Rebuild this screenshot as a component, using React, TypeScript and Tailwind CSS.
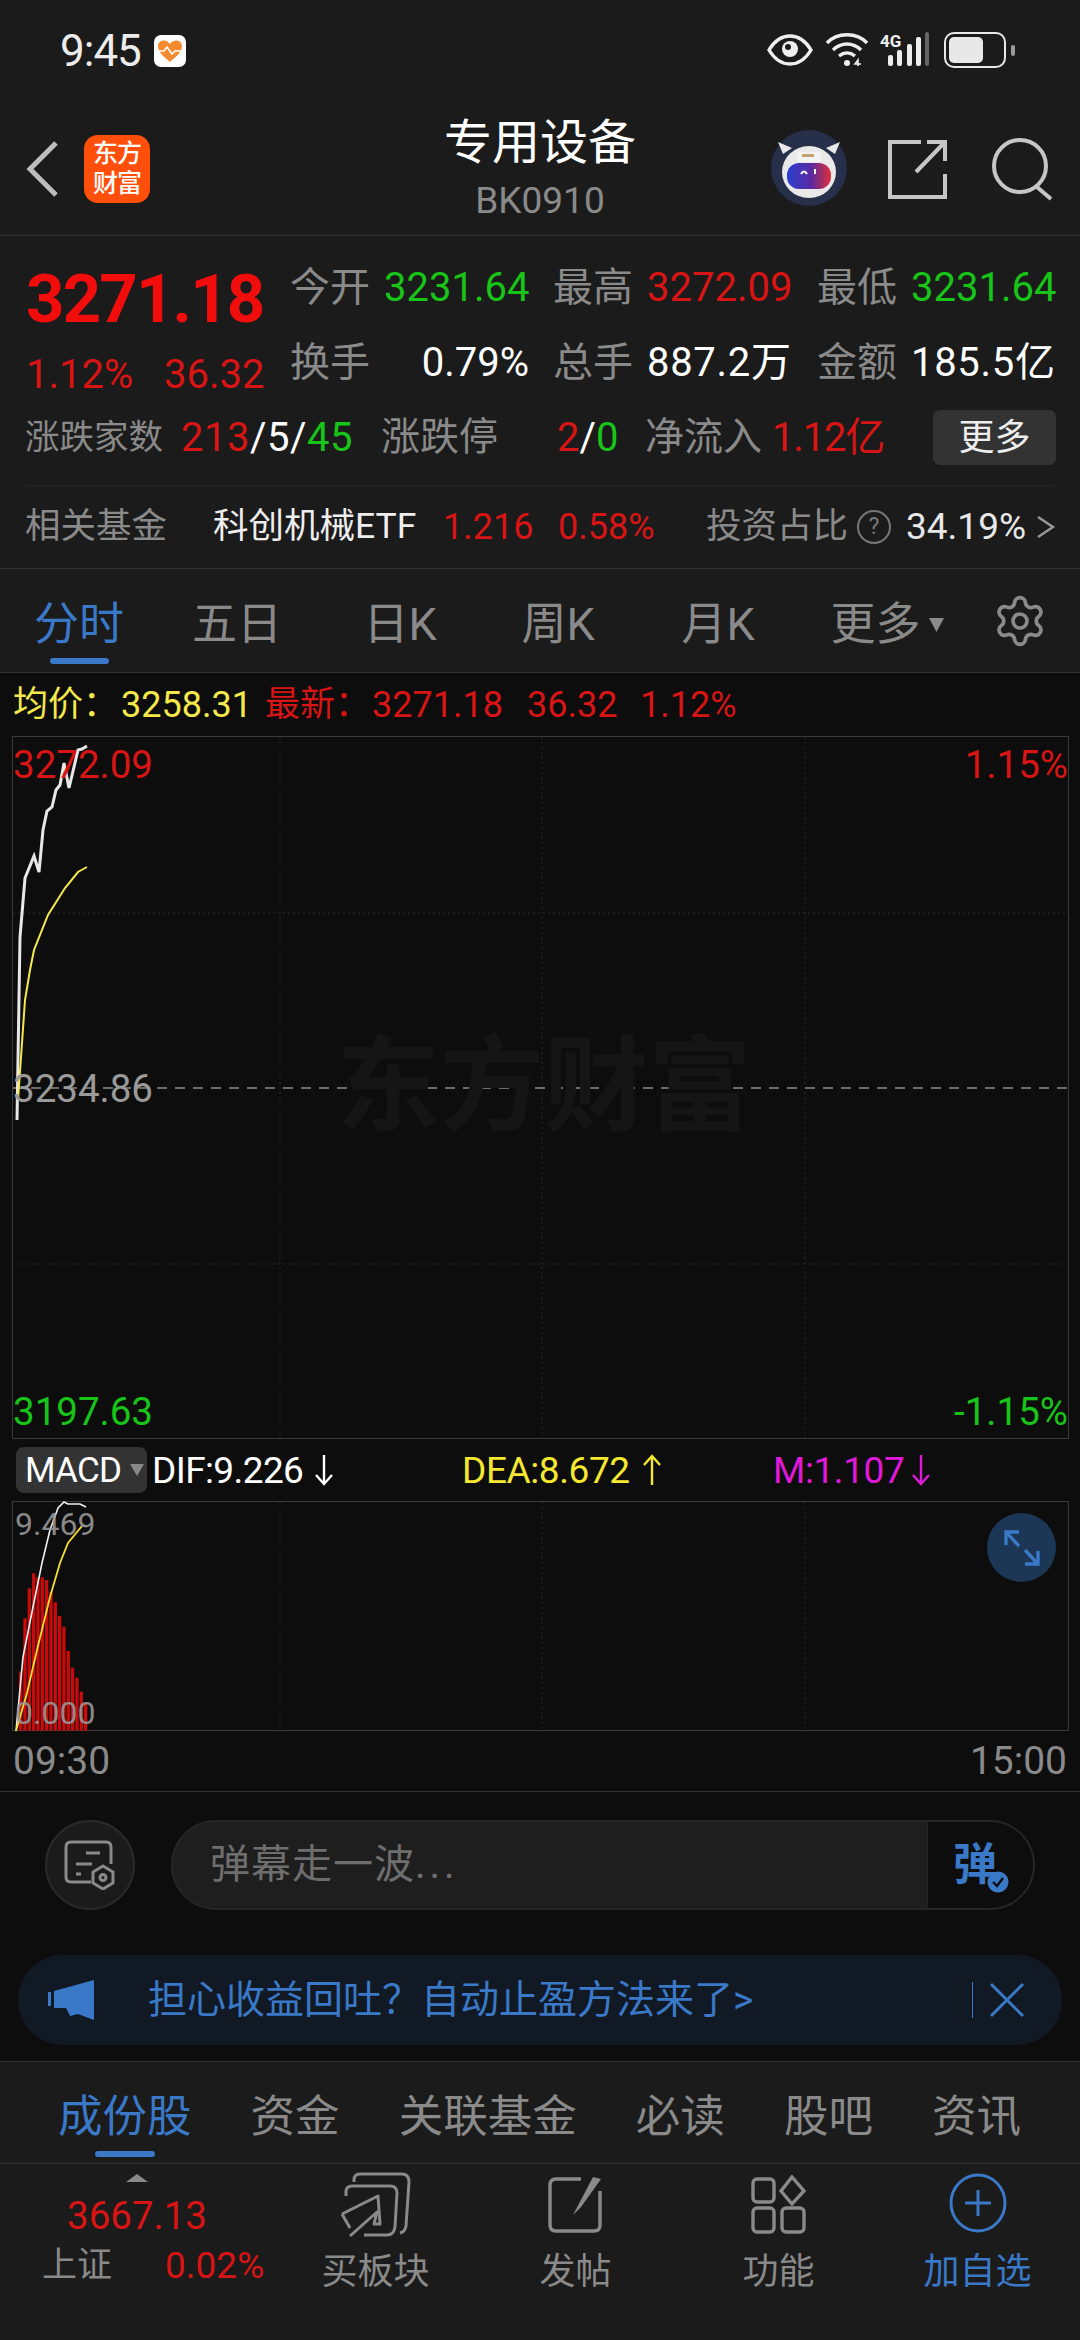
import React from "react";
import { Settings } from "lucide-react";

const Arrow = ({ up, c, x }: { up?: boolean; c: string; x: number }) => (
  <svg width="22" height="32" viewBox="0 0 22 32" fill="none" stroke={c} strokeWidth="2.4" style={{ marginLeft: x }}>
    {up ? (
      <path d="M11 31V3M3 11l8-9 8 9" />
    ) : (
      <path d="M11 1v28M3 21l8 9 8-9" />
    )}
  </svg>
);

const Cell = ({ label, value, cls, w, right }: { label: string; value: string; cls: string; w: string; right?: boolean }) => (
  <div className={`flex items-center h-full ${w}`}>
    <span className="w-[81px] text-[40px] leading-none text-[#8a8a8a] shrink-0">{label}</span>
    <span className={`w-[145px] ml-[13px] text-[40px] leading-none whitespace-nowrap ${right ? "text-right" : ""} ${cls}`}>{value}</span>
  </div>
);

const barTops = [545, 385, 295, 250, 262, 262, 270, 305, 337, 378, 410, 483, 533, 563, 605, 640];

export default function App() {
  return (
    <div className="w-[1080px] h-[2340px] overflow-hidden bg-[#1b1b1b] font-['Roboto','Noto_Sans_CJK_SC',sans-serif] text-white">
      {/* status bar */}
      <div className="h-[100px] flex items-start pt-[32px] pl-[60px] pr-[65px]">
        <span className="text-[44px] leading-[38px] text-[#ececec] tracking-[-1px]">9:45</span>
        <svg className="ml-[13px] mt-[3px]" width="32" height="32" viewBox="0 0 32 32">
          <rect width="32" height="32" rx="7" fill="#fff" />
          <path d="M16 27C9 21 4 17 4 11c0-6 8-8 12-2 4-6 12-4 12 2 0 6-5 10-12 16z" fill="#f58a2e" />
          <path d="M4 16h6l3-4 5 7 3-3h7" fill="none" stroke="#fff" strokeWidth="1.6" />
        </svg>
        <div className="ml-auto flex items-center gap-0">
          <svg width="46" height="32" viewBox="0 0 46 32" fill="none">
            <path d="M2 16C8 6 15 2 23 2s15 4 21 14c-6 10-13 14-21 14S8 26 2 16z" stroke="#eee" strokeWidth="3.4" />
            <circle cx="23" cy="15" r="8" fill="#eee" />
            <circle cx="21" cy="13" r="3" fill="#1b1b1b" />
          </svg>
          <svg className="ml-[12px]" width="46" height="36" viewBox="0 0 46 36" fill="none" stroke="#eee" strokeWidth="3.4">
            <path d="M2 11C12 0 32 0 42 11" />
            <path d="M8 18c8-8 20-8 28 0" />
            <path d="M14 24c5-4 11-4 16 0" />
            <circle cx="22" cy="31" r="3" fill="#eee" stroke="none" />
            <path d="M33 34v-6l-3 4h6" strokeWidth="1.6" />
          </svg>
          <svg className="ml-[9px]" width="50" height="36" viewBox="0 0 50 36" fill="#eee">
            <text x="0" y="15" fontSize="17" fontFamily="Roboto" fontWeight="700">4G</text>
            <rect x="8" y="23" width="5" height="11" rx="2" />
            <rect x="17" y="18" width="5" height="16" rx="2" />
            <rect x="27" y="12" width="5" height="22" rx="2" />
            <rect x="36" y="5" width="5" height="29" rx="2" />
            <rect x="45" y="0" width="4" height="34" rx="2" fill="#666" />
          </svg>
          <div className="ml-[14px] w-[62px] h-[36px] rounded-[10px] border-[2.5px] border-[#e8e8e8] p-[3px]">
            <div className="w-[34px] h-full rounded-[5px] bg-[#e8e8e8]" />
          </div>
          <div className="ml-[5px] w-[4px] h-[11px] rounded-[2px] bg-[#9a9a9a]" />
        </div>
      </div>

      {/* nav */}
      <div className="h-[136px] border-b border-[#333] flex items-start">
        <svg className="ml-[25px] mt-[41px]" width="36" height="56" viewBox="0 0 36 56" fill="none" stroke="#bdbdbd" strokeWidth="5">
          <path d="M31 2L5 28l26 26" />
        </svg>
        <div className="ml-[23px] mt-[35px] w-[66px] h-[68px] rounded-[14px] bg-[#ff4f0a] flex flex-col items-center justify-center text-[25px] leading-[30px] text-[#fff] font-medium tracking-[-1px]">
          <span>东方</span>
          <span>财富</span>
        </div>
        <div className="w-[621px] flex flex-col items-center pl-[159px] pt-[15px]">
          <span className="text-[48px] leading-[56px]">专用设备</span>
          <span className="text-[37px] leading-[40px] mt-[10px] text-[#8a8a8a]">BK0910</span>
        </div>
        <svg className="mt-[30px]" width="76" height="76" viewBox="0 0 76 76">
          <defs>
            <linearGradient id="visor" x1="0" x2="1" y1="0" y2="0">
              <stop offset="0" stopColor="#2a3fd0" />
              <stop offset="0.55" stopColor="#5a2aa0" />
              <stop offset="1" stopColor="#e0303a" />
            </linearGradient>
          </defs>
          <circle cx="38" cy="38" r="38" fill="#27304a" />
          <ellipse cx="38" cy="42" rx="27" ry="26" fill="#e9e9e9" />
          <path d="M12 24l-5-12 14 6zM64 24l5-12-14 6z" fill="#e9e9e9" />
          <rect x="26" y="22" width="24" height="10" rx="3" fill="#f3f3f3" />
          <rect x="31" y="24" width="12" height="3" fill="#c9a070" />
          <rect x="16" y="33" width="44" height="26" rx="12" fill="url(#visor)" />
          <path d="M30 44q3-5 6 0M44 44v-5" stroke="#fff" strokeWidth="2" fill="none" />
        </svg>
        <svg className="ml-[41px] mt-[39px]" width="60" height="60" viewBox="0 0 60 60" fill="none" stroke="#c6c6c6" strokeWidth="4">
          <path d="M33 3H2v55h55V35" />
          <path d="M28 33L56 4M39 3h18v19" />
        </svg>
        <svg className="ml-[43px] mt-[37px]" width="64" height="64" viewBox="0 0 64 64" fill="none" stroke="#c6c6c6" strokeWidth="4">
          <circle cx="29" cy="29" r="26" />
          <path d="M46 50l14 12" />
        </svg>
      </div>

      {/* stats */}
      <div className="h-[249px] pt-[14px]">
        <div className="flex h-[150px]">
          <div className="w-[290px] pl-[26px] shrink-0">
            <div className="h-[94px] pt-[5px] flex items-center text-[67px] leading-none text-[#f20d0d] font-bold tracking-[-1.8px]">3271.18</div>
            <div className="h-[50px] mt-[6px] flex items-center text-[40px] leading-none text-[#d81414] whitespace-nowrap">
              <span className="w-[138px]">1.12%</span>
              <span>36.32</span>
            </div>
          </div>
          <div className="flex-1 flex flex-col">
            <div className="h-[75px] flex">
              <Cell label="今开" value="3231.64" cls="text-[#18c418]" w="w-[263px]" />
              <Cell label="最高" value="3272.09" cls="text-[#d81414]" w="w-[264px]" />
              <Cell label="最低" value="3231.64" cls="text-[#18c418]" w="" />
            </div>
            <div className="h-[75px] flex">
              <Cell label="换手" value="0.79%" cls="text-white" w="w-[263px]" right />
              <Cell label="总手" value="887.2万" cls="text-white tracking-[0.7px]" w="w-[264px]" />
              <Cell label="金额" value="185.5亿" cls="text-white tracking-[0.7px]" w="" />
            </div>
          </div>
        </div>
        <div className="h-[75px] flex items-center pl-[25px] pr-[24px] text-[#8a8a8a] whitespace-nowrap">
          <span className="w-[156px] text-[34.5px] leading-none">涨跌家数</span>
          <span className="w-[174px] text-[40px] leading-none tracking-[0.5px]">
            <span className="text-[#d81414]">213</span>
            <span className="text-white">/5/</span>
            <span className="text-[#18c418]">45</span>
          </span>
          <span className="ml-[26px] w-[176px] text-[39px] leading-none">涨跌停</span>
          <span className="w-[61px] text-[40px] leading-none">
            <span className="text-[#d81414]">2</span>
            <span className="text-white">/</span>
            <span className="text-[#18c418]">0</span>
          </span>
          <span className="ml-[27px] w-[117px] text-[39px] leading-none">净流入</span>
          <span className="ml-[10px] text-[40px] leading-none text-[#d81414] tracking-[-1.2px]">1.12亿</span>
          <span className="ml-auto w-[123px] h-[55px] rounded-[7px] bg-[#333] flex items-center justify-center text-[36px] leading-none text-[#eee]">更多</span>
        </div>
        <div className="mx-[25px] mt-[10px] h-px bg-[#242424]" />
      </div>

      {/* fund row */}
      <div className="h-[84px] border-b border-[#333] flex items-center pl-[25px] pr-[24px] whitespace-nowrap">
        <span className="w-[188px] text-[35.5px] leading-none text-[#8a8a8a]">相关基金</span>
        <span className="w-[230px] text-[35.5px] leading-none text-[#eee]">科创机械ETF</span>
        <span className="w-[115px] text-[36px] leading-none text-[#d81414]">1.216</span>
        <span className="w-[148px] text-[36px] leading-none text-[#d81414]">0.58%</span>
        <span className="w-[151px] text-[35.5px] leading-none text-[#8a8a8a]">投资占比</span>
        <span className="w-[34px] h-[34px] rounded-full border-[2.5px] border-[#777] flex items-center justify-center text-[23px] leading-none text-[#777]">?</span>
        <span className="ml-[15px] text-[37px] leading-none text-[#e8e8e8]">34.19%</span>
        <svg className="ml-auto" width="20" height="26" viewBox="0 0 20 26" fill="none" stroke="#999" strokeWidth="2.4">
          <path d="M2 3l15 10L2 23" />
        </svg>
      </div>

      {/* period tabs */}
      <div className="h-[104px] border-b border-[#333] grid grid-cols-[158px_158px_168px_148px_172px_156px_120px] text-[45px] leading-[42px] text-[#8a8a8a]">
        <div className="flex flex-col items-center pt-[35px]">
          <span className="text-[#3a78c8] text-[45px] leading-[42px]">分时</span>
          <span className="mt-[12px] w-[59px] h-[6px] rounded-full bg-[#3a78c8]" />
        </div>
        <div className="text-center pt-[35px]">五日</div>
        <div className="text-center pt-[35px]">日K</div>
        <div className="text-center pt-[35px]">周K</div>
        <div className="text-center pt-[35px]">月K</div>
        <div className="flex items-start justify-center pt-[35px] pl-[10px]">
          <span>更多</span>
          <svg className="ml-[8px] mt-[14px]" width="15" height="14" viewBox="0 0 15 14" fill="#8a8a8a">
            <path d="M0 0h15L7.5 14z" />
          </svg>
        </div>
        <div className="flex justify-center pt-[24px]">
          <Settings size={56} strokeWidth={1.6} color="#8a8a8a" />
        </div>
      </div>

      {/* dark area */}
      <div className="h-[1389px] bg-[#0d0d0d] border-b border-[#333]">
        {/* quote line */}
        <div className="h-[63px] flex items-center pl-[13px] text-[36px] leading-none whitespace-nowrap">
          <span className="w-[108px] text-[#f5e84a] text-[35px]">均价：</span>
          <span className="w-[144px] text-[#f5e84a]">3258.31</span>
          <span className="w-[107px] text-[#d81414] text-[35px]">最新：</span>
          <span className="w-[155px] text-[#d81414]">3271.18</span>
          <span className="w-[113px] text-[#d81414]">36.32</span>
          <span className="text-[#d81414]">1.12%</span>
        </div>

        {/* price chart */}
        <div className="relative h-[703px] mx-[12px]">
          <svg className="block" width="1057" height="703" viewBox="12 736 1057 703" fill="none">
            <rect x="12.5" y="736.5" width="1056" height="702" stroke="#3a3a3a" />
            <path d="M280 737V1438M542 737V1438M805 737V1438M13 913H1068M13 1264H1068" stroke="#2a2a2a" strokeDasharray="2 3" />
            <path d="M13 1088H1068" stroke="#8a8a8a" strokeWidth="1.5" strokeDasharray="10 8" />
            <path d="M17 1120L20 937L25 878L34 856L39 872L43 830L47 811L52 807L56 790L60 785L64 763L69 788L78 750L82 749L87 746" stroke="#e8e8e8" strokeWidth="3" />
            <path d="M18 1100L25 1000L30 970L34 950L48 915L65 888L78 872L87 867" stroke="#f5e84a" strokeWidth="2" />
          </svg>
          <span className="absolute left-[1px] top-[11px] text-[38.5px] leading-[36px] text-[#d81414]">3272.09</span>
          <span className="absolute right-0 top-[11px] text-[38.5px] leading-[36px] text-[#d81414]">1.15%</span>
          <span className="absolute left-[1px] top-[335px] text-[38.5px] leading-[36px] text-[#9a9a9a]">3234.86</span>
          <span className="absolute left-[1px] top-[658px] text-[38.5px] leading-[36px] text-[#18c418]">3197.63</span>
          <span className="absolute right-0 top-[658px] text-[38.5px] leading-[36px] text-[#18c418]">-1.15%</span>
          <span className="absolute left-[324px] top-[300px] text-[104px] leading-[104px] font-bold text-[#151515]">东方财富</span>
        </div>

        {/* macd legend */}
        <div className="h-[62px] flex items-center pl-[16px] text-[37px] leading-none whitespace-nowrap">
          <div className="w-[131px] h-[46px] rounded-[8px] bg-[#333] flex items-center pl-[9px]">
            <span className="text-[35px] tracking-[-0.8px] text-white">MACD</span>
            <svg className="ml-[9px]" width="14" height="12" viewBox="0 0 14 12" fill="#888">
              <path d="M0 0h14L7 12z" />
            </svg>
          </div>
          <span className="ml-[5px] w-[153px] text-white tracking-[-0.6px]">DIF:9.226</span>
          <Arrow c="#fff" x={8} />
          <span className="ml-[127px] w-[170px] text-[#f5e82f] tracking-[-0.4px]">DEA:8.672</span>
          <Arrow up c="#f5e82f" x={9} />
          <span className="ml-[110px] w-[128px] text-[#e018d8] tracking-[-0.4px]">M:1.107</span>
          <Arrow c="#e018d8" x={9} />
        </div>

        {/* macd chart */}
        <div className="relative h-[231px] mx-[12px]">
          <svg className="block" width="1057" height="231" viewBox="12 1501 1057 231" fill="none">
            <rect x="12.5" y="1501.5" width="1056" height="229" stroke="#3a3a3a" />
            <path d="M280 1502V1730M542 1502V1730M805 1502V1730" stroke="#2a2a2a" strokeDasharray="2 3" />
            {barTops.map((t, i) => (
              <rect key={i} x={19 + i * 4.33} y={1490 + t / 3} width="3.3" height={(722 - t) / 3} fill="#c80a0a" />
            ))}
            <path d="M16 1731L23 1657L33 1607L42 1563L50 1530L58 1508L64 1502L68 1504L75 1504L80 1504L86 1507" stroke="#f0f0f0" strokeWidth="1.6" />
            <path d="M16 1731L27 1693L37 1650L50 1597L60 1563L68 1543L82 1526" stroke="#f5e030" strokeWidth="1.8" />
          </svg>
          <span className="absolute left-[3px] top-[5px] text-[32px] leading-[36px] text-[#9a9a9a]/90">9.469</span>
          <span className="absolute left-[3px] top-[194px] text-[32px] leading-[36px] text-[#9a9a9a]/90">0.000</span>
          <div className="absolute right-[12px] top-[12px] w-[69px] h-[69px] rounded-full bg-[#1c3656] flex items-center justify-center">
            <svg width="36" height="36" viewBox="0 0 36 36" fill="none" stroke="#3a78c8" strokeWidth="3.4">
              <path d="M2 15V2h13M2 2l13 14M34 21v13H21M34 34L21 20" />
            </svg>
          </div>
        </div>

        {/* time axis */}
        <div className="h-[59px] flex items-center justify-between pl-[13px] pr-[13px] text-[39px] leading-none text-[#8a8a8a]">
          <span>09:30</span>
          <span>15:00</span>
        </div>

        {/* comment bar */}
        <div className="border-t border-[#333] h-[164px] pt-[28px] pl-[45px] flex items-start">
          <div className="w-[90px] h-[90px] rounded-full border-2 border-[#2a2a2a] bg-[#1b1b1b] flex items-center justify-center">
            <svg width="52" height="50" viewBox="0 0 52 50" fill="none" stroke="#8a8a8a" strokeWidth="3">
              <path d="M47 24V7q0-5-5-5H7Q2 2 2 7v30q0 5 5 5h20" />
              <path d="M22 13h14M12 24h16M12 34h5" />
              <path d="M39 26l10 6v11l-10 6-10-6V32z" fill="#1b1b1b" />
              <circle cx="39" cy="37.500" r="3" />
            </svg>
          </div>
          <div className="ml-[36px] w-[864px] h-[90px] rounded-full border-2 border-[#262626] bg-[#1e1e1e] flex overflow-hidden">
            <div className="flex-1 pl-[37px] flex items-center text-[40px] leading-none text-[#6e6e6e] tracking-[1px]">
              弹幕走一波<span className="tracking-[4px]">...</span>
            </div>
            <div className="w-[106px] bg-[#0d0d0d] relative flex items-center pl-[25px] border-l border-[#262626]">
              <span className="text-[44px] leading-none font-bold text-[#3a78c8]">弹</span>
              <svg className="absolute left-[59px] top-[49px]" width="22" height="22" viewBox="0 0 22 22" fill="none">
                <circle cx="11" cy="11" r="10.500" fill="#3a78c8" />
                <path d="M6 11l4 4 6-8" stroke="#0d0d0d" strokeWidth="2.400" />
              </svg>
            </div>
          </div>
        </div>

        {/* banner */}
        <div className="mx-[18px] h-[90px] rounded-[45px] bg-[#111a24] flex items-center pl-[30px] text-[#3a78c8] whitespace-nowrap">
          <svg width="46" height="40" viewBox="0 0 46 40" fill="#3a78c8">
            <rect x="0" y="12" width="3" height="14" />
            <path d="M6 11L46 0V40L30 34 22 36 18 28H6z" />
          </svg>
          <span className="ml-[54px] text-[39px] leading-none">担心收益回吐？自动止盈方法来了&gt;</span>
          <div className="ml-auto w-px h-[36px] bg-[#3a78c8]" />
          <svg className="ml-[16px] mr-[37px]" width="36" height="36" viewBox="0 0 36 36" fill="none" stroke="#3a78c8" strokeWidth="3">
            <path d="M2 2l32 32M34 2L2 34" />
          </svg>
        </div>
      </div>

      {/* bottom section tabs */}
      <div className="h-[102px] border-b border-[#333] flex justify-between pl-[58px] pr-[59px] pt-[32px] text-[44.5px] leading-[46px] text-[#8a8a8a] whitespace-nowrap">
        <div className="flex flex-col items-center">
          <span className="text-[#3a78c8]">成份股</span>
          <span className="mt-[11px] w-[60px] h-[6px] rounded-full bg-[#3a78c8]" />
        </div>
        <span>资金</span>
        <span>关联基金</span>
        <span>必读</span>
        <span>股吧</span>
        <span>资讯</span>
      </div>

      {/* bottom bar */}
      <div className="grid grid-cols-[274px_repeat(4,201px)] h-[175px] text-[#8a8a8a]">
        <div className="flex flex-col items-center pt-[10px] whitespace-nowrap">
          <svg width="22" height="8" viewBox="0 0 22 8" fill="#8a8a8a">
            <path d="M11 0l11 8H0z" />
          </svg>
          <span className="mt-[16px] h-[36px] text-[38.5px] leading-[36px] text-[#d81414]">3667.13</span>
          <div className="mt-[12px] self-start ml-[42px] flex items-center">
            <span className="w-[123px] text-[35px] leading-[40px]">上证</span>
            <span className="text-[37px] leading-[40px] text-[#d81414]">0.02%</span>
          </div>
        </div>
        <div className="flex flex-col items-center pt-[8px] pl-[2px]">
          <svg width="72" height="66" viewBox="0 0 72 66" fill="none" stroke="#8a8a8a" strokeWidth="3">
            <path d="M14 10V8q0-6 6-6h42q7 0 7 8l-3 44q-1 6-6 7" />
            <path d="M6 24v-4q0-6 6-6h38q7 0 7 7l-2 34q-1 8-8 8H24" />
            <path d="M2 42L38 24l2 28-6 0 3-12L10 64" strokeLinejoin="round" />
            <path d="M2 42l8 14" />
          </svg>
          <span className="mt-[14px] text-[36px] leading-[40px]">买板块</span>
        </div>
        <div className="flex flex-col items-center pt-[11px]">
          <svg width="58" height="60" viewBox="0 0 58 60" fill="none" stroke="#8a8a8a" strokeWidth="3.400">
            <path d="M34 4H9Q3 4 3 10v40q0 6 6 6h38q6 0 6-6V16" />
            <path d="M26 40L46 2l8 2-20 28z" fill="#8a8a8a" stroke="none" />
          </svg>
          <span className="mt-[17px] text-[36px] leading-[40px]">发帖</span>
        </div>
        <div className="flex flex-col items-center pt-[11px] pl-[4px]">
          <svg width="56" height="60" viewBox="0 0 56 60" fill="none" stroke="#8a8a8a" strokeWidth="3.400">
            <rect x="2" y="4" width="21" height="23" rx="4" />
            <rect x="2" y="33" width="21" height="24" rx="4" />
            <rect x="31" y="33" width="22" height="24" rx="4" />
            <path d="M41 2l12 14-12 13-11-13z" />
          </svg>
          <span className="mt-[17px] text-[36px] leading-[40px]">功能</span>
        </div>
        <div className="flex flex-col items-center pt-[9px] text-[#3a78c8]">
          <svg width="58" height="60" viewBox="0 0 58 60" fill="none" stroke="#3a78c8" strokeWidth="3">
            <ellipse cx="29" cy="30" rx="27" ry="28" />
            <path d="M29 17v26M16 30h26" />
          </svg>
          <span className="mt-[19px] text-[36px] leading-[40px]">加自选</span>
        </div>
      </div>
    </div>
  );
}
